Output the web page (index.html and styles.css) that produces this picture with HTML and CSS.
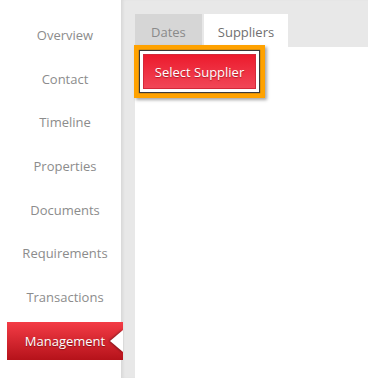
FILE: index.html
```html
<!DOCTYPE html>
<html lang="en">

<head>
    <meta charset="UTF-8">
    <meta name="viewport" content="width=device-width, initial-scale=1.0">
    <title>Management</title>
    <link rel="stylesheet" href="styles.css">
</head>

<body>
    <div class="layout">
        <nav class="sidebar">
            <a class="nav-item" href="#">Overview</a>
            <a class="nav-item" href="#">Contact</a>
            <a class="nav-item" href="#">Timeline</a>
            <a class="nav-item" href="#">Properties</a>
            <a class="nav-item" href="#">Documents</a>
            <a class="nav-item" href="#">Requirements</a>
            <a class="nav-item" href="#">Transactions</a>
            <a class="nav-item active" href="#">Management</a>
        </nav>
        <main class="main">
            <div class="tabs">
                <div class="tab">Dates</div>
                <div class="tab selected">Suppliers</div>
            </div>
            <div class="panel">
                <button class="btn-select">Select Supplier</button>
            </div>
        </main>
    </div>
</body>

</html>
```

FILE: styles.css
```css
:root {
    --frame-bg: #e8e8e8;
    --tab-bg: #d6d6d6;
    --nav-text: #8c8c8c;
    --focus: #ffa200;
}

* {
    box-sizing: border-box;
    margin: 0;
    padding: 0;
}

html,
body {
    height: 100%;
}

body {
    font-family: "Open Sans", "Noto Sans", sans-serif;
    background-color: #fff;
}

.layout {
    display: flex;
    height: 100%;
}

.sidebar {
    width: 121px;
    flex-shrink: 0;
    padding-top: 16px;
    display: flex;
    flex-direction: column;
    gap: 5.7px;
    position: relative;
    z-index: 1;
}

.nav-item {
    display: block;
    position: relative;
    width: 116px;
    height: 38px;
    margin-left: 7px;
    line-height: 38px;
    text-align: center;
    font-size: 13px;
    color: var(--nav-text);
    text-decoration: none;
}

.nav-item.active {
    color: #fff;
    background: linear-gradient(to bottom, #f43c46, #b5121a);
    text-shadow: 0 1px 1px rgba(0, 0, 0, 0.35);
}

.nav-item.active::after {
    content: "";
    position: absolute;
    right: 0;
    top: 50%;
    margin-top: -11px;
    border-top: 11px solid transparent;
    border-bottom: 11px solid transparent;
    border-right: 13px solid #fff;
    filter: drop-shadow(-1px 0 1px rgba(0, 0, 0, 0.45));
}

.main {
    flex-grow: 1;
    display: flex;
    flex-direction: column;
    background-color: var(--frame-bg);
    padding: 14px 0 0 14px;
    box-shadow: inset 3px 0 3px -1px rgba(0, 0, 0, 0.07);
}

.tabs {
    display: flex;
    gap: 2px;
}

.tab {
    height: 33px;
    padding: 9px 16px 0;
    font-size: 13px;
    line-height: 18px;
    color: #8a8a8a;
    background-color: var(--tab-bg);
}

.tab.selected {
    padding: 9px 14px 0;
    color: #707070;
    background-color: #fff;
}

.panel {
    flex-grow: 1;
    background-color: #fff;
    padding: 7px 0 0 8px;
}

.btn-select {
    display: block;
    width: 113px;
    height: 35px;
    font-family: inherit;
    font-size: 13px;
    color: #fff;
    text-shadow: 0 1px 1px rgba(120, 0, 10, 0.5);
    background: linear-gradient(to bottom, #ec1b2d, #f14657);
    border: 1px solid #d4283a;
    cursor: pointer;
    box-shadow:
        0 0 0 3px #fff,
        0 0 1px 4px #3a3a3a,
        0 0 0 9px var(--focus),
        2px 2px 3px 9px rgba(0, 0, 0, 0.35);
}
```
